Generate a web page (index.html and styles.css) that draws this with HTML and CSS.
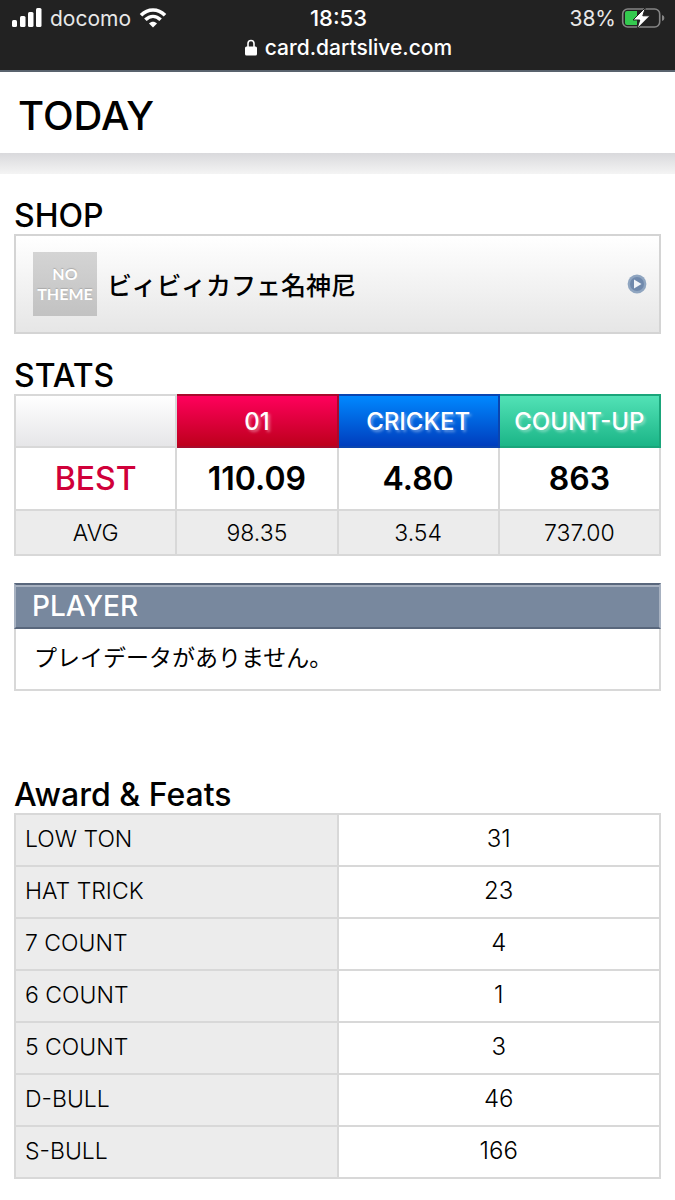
FILE: index.html
```
<!DOCTYPE html>
<html lang="ja">
<head>
  <meta charset="UTF-8">
  <meta name="viewport" content="width=device-width, initial-scale=1.0">
  <title>TODAY</title>
  <link rel="stylesheet" href="styles.css">
</head>
<body>

<header class="browser-bar">
  <div class="status-row">
    <div class="carrier">
      <svg width="30" height="20" viewBox="0 0 30 20" fill="#fff" aria-hidden="true">
        <rect x="0" y="12" width="5" height="7" rx="1.5"/>
        <rect x="8" y="8" width="5.5" height="11" rx="1.5"/>
        <rect x="16" y="4" width="5.5" height="15" rx="1.5"/>
        <rect x="24" y="0" width="5.5" height="19" rx="1.5"/>
      </svg>
      <span>docomo</span>
      <svg width="28" height="20" viewBox="0 0 28 20" fill="none" stroke="#fff" stroke-width="3.6" aria-hidden="true">
        <path d="M2 7.2 C9 .2 19 .2 26 7.2"/>
        <path d="M6.4 11.8 C11 7.4 17 7.4 21.6 11.8"/>
        <path d="M10 15.6 C12.5 13.2 15.5 13.2 18 15.6 L14 19.6 Z" fill="#fff" stroke="none"/>
      </svg>
    </div>
    <div class="clock">18:53</div>
    <div class="battery">
      <span>38%</span>
      <svg width="44" height="22" viewBox="0 0 44 22" aria-hidden="true">
        <rect x="1.7" y="2" width="37" height="18" rx="5" fill="none" stroke="#858585" stroke-width="1.6"/>
        <path d="M6 4 H16 V18 H6 Q4 18 4 16 V6 Q4 4 6 4 Z" fill="#34c94f"/>
        <path d="M41 8 Q43.4 8.6 43.4 11 Q43.4 13.4 41 14 Z" fill="#858585"/>
        <path d="M24.5 .5 L12 13 H18.8 L16 21.8 L29 8.8 H21.8 Z" fill="#fff" stroke="#222" stroke-width="1"/>
      </svg>
    </div>
  </div>
  <div class="address">
    <svg width="12" height="17" viewBox="0 0 12 17" aria-hidden="true">
      <path d="M3 8 V4.5 C3 .4 9 .4 9 4.5 V8" fill="none" stroke="#fff" stroke-width="1.6"/>
      <rect x="0" y="7.5" width="12" height="9" rx="1.5" fill="#fff"/>
    </svg>
    <span>card.dartslive.com</span>
  </div>
</header>

<h1>TODAY</h1>

<main>
  <section>
    <h2>SHOP</h2>
    <a class="shop" href="#">
      <span class="theme"><span>NO</span><span>THEME</span></span>
      <span class="shop-name">ビィビィカフェ名神尼</span>
      <svg width="20" height="20" viewBox="0 0 20 20" aria-hidden="true">
        <circle cx="10" cy="10" r="9.4" fill="#8fa5c0"/>
        <circle cx="10" cy="10" r="7" fill="#7089ac"/>
        <path d="M7 5.5 L14.5 10 L7 14.5 Z" fill="#f2f5f9"/>
      </svg>
    </a>
  </section>

  <section>
    <h2>STATS</h2>
    <table class="stats">
      <thead>
        <tr>
          <td class="blank"></td>
          <th class="zero-one" scope="col">01</th>
          <th class="cricket" scope="col">CRICKET</th>
          <th class="count-up" scope="col">COUNT-UP</th>
        </tr>
      </thead>
      <tbody>
        <tr class="best">
          <th scope="row">BEST</th>
          <td>110.09</td>
          <td>4.80</td>
          <td>863</td>
        </tr>
        <tr class="avg">
          <th scope="row">AVG</th>
          <td>98.35</td>
          <td>3.54</td>
          <td>737.00</td>
        </tr>
      </tbody>
    </table>
  </section>

  <section class="player">
    <h3>PLAYER</h3>
    <p>プレイデータがありません。</p>
  </section>

  <section>
    <h2>Award &amp; Feats</h2>
    <table class="awards">
      <tbody>
        <tr><th scope="row">LOW TON</th><td>31</td></tr>
        <tr><th scope="row">HAT TRICK</th><td>23</td></tr>
        <tr><th scope="row">7 COUNT</th><td>4</td></tr>
        <tr><th scope="row">6 COUNT</th><td>1</td></tr>
        <tr><th scope="row">5 COUNT</th><td>3</td></tr>
        <tr><th scope="row">D-BULL</th><td>46</td></tr>
        <tr><th scope="row">S-BULL</th><td>166</td></tr>
      </tbody>
    </table>
  </section>
</main>

</body>
</html>
```
FILE: styles.css
```
* {
  box-sizing: border-box;
}

body {
  margin: 0;
  background-color: #fff;
  color: #000;
  font-family: Inter, "Noto Sans CJK JP", sans-serif;
}

/* Browser bar */
.browser-bar {
  padding: 4px 10px 8px 12px;
  background-color: #222;
  border-bottom: 2px solid #59636e;
  color: #fff;
}

.status-row {
  display: grid;
  grid-template-columns: 1fr auto 1fr;
  align-items: center;
  height: 28px;
  font-size: 21px;
}

.carrier,
.battery {
  display: flex;
  align-items: center;
  gap: 8px;
  color: #e8e8e8;
}

.battery {
  justify-content: flex-end;
  gap: 5px;
}

.clock {
  font-size: 22px;
  font-weight: 500;
}

.address {
  display: flex;
  align-items: center;
  justify-content: center;
  gap: 8px;
  padding-left: 20px;
  height: 30px;
  font-size: 21px;
  font-weight: 500;
}

h1 {
  margin: 0;
  padding: 20px 18px 13px;
  font-size: 40px;
  font-weight: 500;
  line-height: 48px;
}

/* Shaded strip under the title */
main {
  padding: 43px 14px 20px;
  background: linear-gradient(#d9d9dc, #f4f4f4) no-repeat top / 100% 21px;
}

section {
  margin-bottom: 22px;
}

h2 {
  margin: 0;
  padding-top: 2px;
  font-size: 32px;
  font-weight: 500;
  line-height: 36px;
}

/* Shop */
.shop {
  display: flex;
  align-items: center;
  gap: 10px;
  height: 100px;
  padding: 0 12px 0 17px;
  border: 2px solid #d4d4d4;
  background: linear-gradient(#fff, #e6e6e6);
  color: #000;
  text-decoration: none;
}

.theme {
  display: flex;
  flex-direction: column;
  align-items: center;
  justify-content: center;
  width: 64px;
  height: 64px;
  background: linear-gradient(#d4d4d4, #c2c2c2);
  color: #fff;
  font-family: Lato, sans-serif;
  font-size: 16px;
  font-weight: 700;
  line-height: 20px;
  text-shadow: 0 -1px 1px #aaa;
}

.shop-name {
  flex: 1;
  font-size: 25px;
  font-weight: 500;
}

/* Tables */
table {
  width: 100%;
  table-layout: fixed;
  border-collapse: separate;
  border-spacing: 0;
  border-left: 2px solid #d8d8d8;
}

th,
td {
  padding: 0;
  border-right: 2px solid #d8d8d8;
  border-bottom: 2px solid #d8d8d8;
  text-align: center;
}

tr:first-child > * {
  border-top: 2px solid #d8d8d8;
}

.stats thead {
  height: 54px;
  font-size: 24px;
}

.stats thead th {
  color: #fff;
  font-weight: 500;
  text-shadow: 2px 2px 3px rgba(255, 255, 255, 0.4);
}

.stats .blank {
  background: linear-gradient(#fff, #e6e6e8);
}

.stats .zero-one {
  background: linear-gradient(#ff005c, #bd001c);
  border-color: #a80a2c;
}

.stats .cricket {
  background: linear-gradient(#0088ff, #003dbd);
  border-color: #0a45b0;
}

.stats .count-up {
  background: linear-gradient(#52e2b6, #1bb587);
  border-color: #1aa57a;
}

.stats .best > * {
  height: 63px;
  border-top: 0;
  font-size: 32px;
  font-weight: 600;
}

.stats .best th {
  color: #d0003a;
  font-weight: 500;
}

.stats .avg > * {
  height: 45px;
  background-color: #ececec;
  font-size: 23px;
  font-weight: 300;
}

/* Player */
.player {
  margin: 27px 0 84px;
}

.player h3 {
  margin: 0;
  padding-left: 16px;
  border: 2px solid #59677c;
  border-left-color: #a7b1c0;
  border-right-color: #a7b1c0;
  background-color: #78889e;
  box-shadow: inset 0 2px #a7b1c0;
  color: #fff;
  font-size: 28px;
  font-weight: 500;
  line-height: 42px;
}

.player p {
  margin: 0;
  padding: 8px 18px 9px;
  border: 2px solid #d8d8d8;
  border-top: 0;
  font-size: 23px;
  line-height: 43px;
}

/* Awards */
.awards th,
.awards td {
  height: 52px;
  padding-bottom: 3px;
  font-size: 24px;
  font-weight: 300;
}

.awards tr:first-child > * {
  height: 54px;
}

.awards th {
  padding-left: 9px;
  background-color: #ececec;
  font-size: 23px;
  text-align: left;
}
```
